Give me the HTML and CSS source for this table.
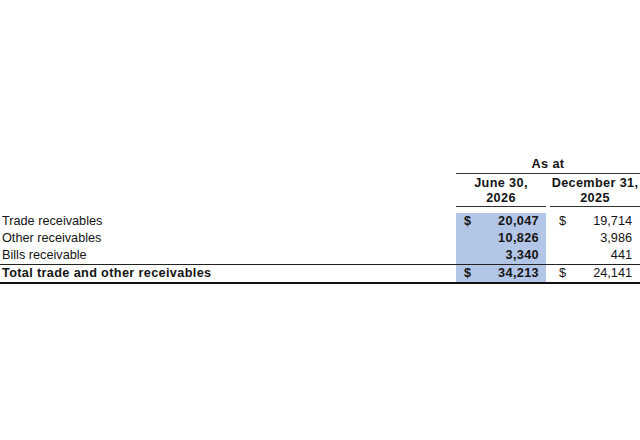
FILE: index.html
```html
<!DOCTYPE html>
<html>
<head>
<meta charset="utf-8">
<link rel="stylesheet" href="styles.css">
</head>
<body>
<div class="page">
  <table class="fin">
    <colgroup>
      <col class="c-label">
      <col class="c-amt">
      <col class="c-gap">
      <col class="c-amt">
    </colgroup>
    <thead>
      <tr class="h-asat">
        <th></th>
        <th colspan="3" class="asat">As at</th>
      </tr>
      <tr class="h-date1">
        <th></th>
        <th class="hd">June 30,</th>
        <th></th>
        <th class="hd">December 31,</th>
      </tr>
      <tr class="h-date2">
        <th></th>
        <th class="hd ul">2026</th>
        <th></th>
        <th class="hd ul">2025</th>
      </tr>
      <tr class="spacer"><th colspan="4"></th></tr>
    </thead>
    <tbody>
      <tr>
        <td class="label">Trade receivables</td>
        <td class="amt cur"><span class="sym">$</span><span class="num">20,047</span></td>
        <td></td>
        <td class="amt"><span class="sym">$</span><span class="num">19,714</span></td>
      </tr>
      <tr>
        <td class="label">Other receivables</td>
        <td class="amt cur"><span class="num">10,826</span></td>
        <td></td>
        <td class="amt"><span class="num">3,986</span></td>
      </tr>
      <tr>
        <td class="label">Bills receivable</td>
        <td class="amt cur"><span class="num">3,340</span></td>
        <td></td>
        <td class="amt"><span class="num">441</span></td>
      </tr>
      <tr class="total">
        <td class="label">Total trade and other receivables</td>
        <td class="amt cur"><span class="sym">$</span><span class="num">34,213</span></td>
        <td></td>
        <td class="amt"><span class="sym">$</span><span class="num">24,141</span></td>
      </tr>
    </tbody>
  </table>
</div>
</body>
</html>
```

FILE: styles.css
```css
html, body {
  margin: 0;
  padding: 0;
  background: #ffffff;
}

.page {
  width: 640px;
  height: 440px;
  overflow: hidden;
  padding-top: 156px;
  box-sizing: border-box;
  font-family: "Liberation Sans", Arial, sans-serif;
  font-size: 12.7px;
  color: #141414;
}

.fin {
  width: 640px;
  table-layout: fixed;
  border-collapse: collapse;
  border-spacing: 0;
}

.c-label { width: 456px; }
.c-amt { width: 90px; }
.c-gap { width: 4px; }

.fin th,
.fin td {
  padding: 0;
  height: 17px;
  line-height: 17px;
  white-space: nowrap;
  overflow: visible;
}

.fin th {
  font-weight: bold;
  text-align: center;
  letter-spacing: 0.35px;
}

.h-asat th { height: 16px; }

.h-asat th.asat {
  border-bottom: 1px solid #333333;
}

.h-date1 th { height: 18px; }

.h-date2 th.ul {
  border-bottom: 1px solid #333333;
}

.h-date2 th { height: 14px; line-height: 12px; vertical-align: top; }

.spacer th { height: 6px; line-height: 6px; }

.label {
  padding-left: 2px !important;
  text-align: left;
}

.amt .sym {
  float: left;
  padding-left: 9px;
}

.amt .num {
  float: right;
  padding-right: 8px;
}

.amt.cur {
  background: #b4c6e7;
  font-weight: bold;
  letter-spacing: 0.35px;
}

.amt.cur .sym { padding-left: 8px; }
.amt.cur .num { padding-right: 7px; }

.total td {
  border-top: 1px solid #222222;
  border-bottom: 2px solid #111111;
}

.total .label {
  font-weight: bold;
  letter-spacing: 0.35px;
}
```
